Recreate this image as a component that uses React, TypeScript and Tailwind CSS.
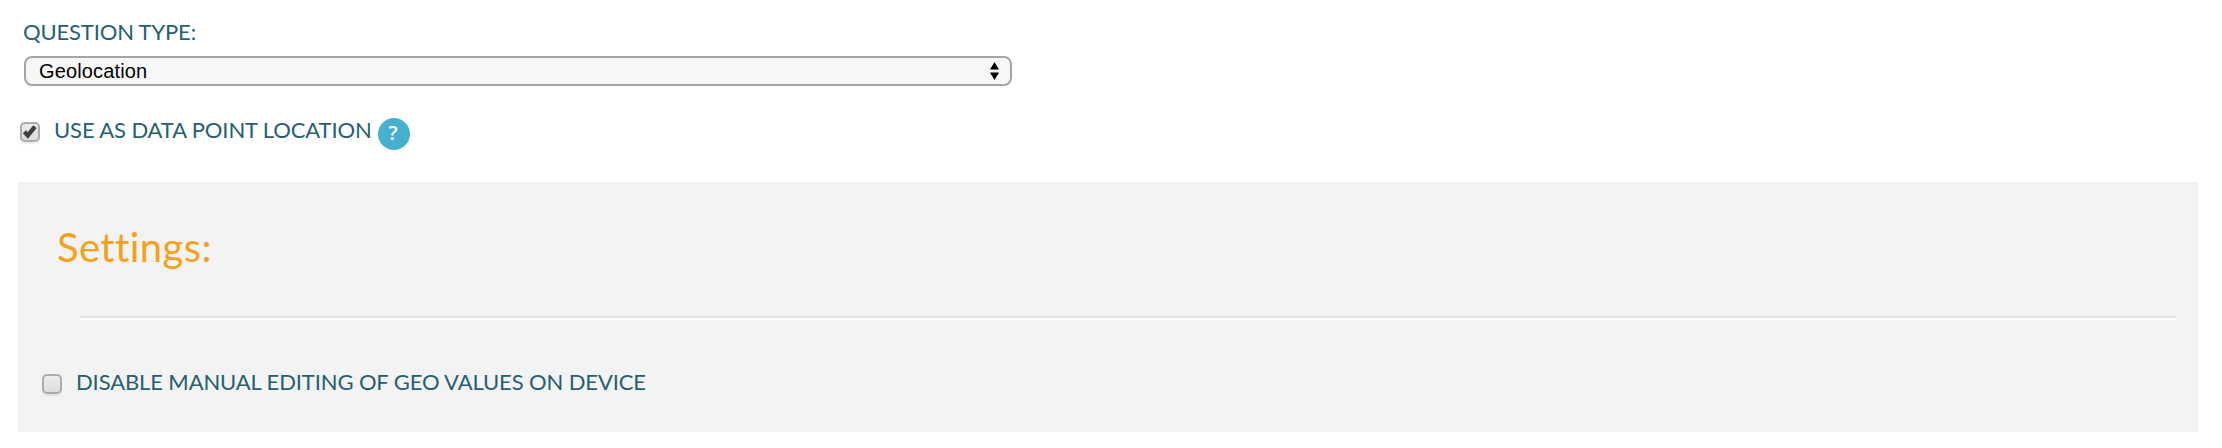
import type { ReactNode } from 'react';

function Check({ checked = false }: { checked?: boolean }) {
  return (
    <span
      role="checkbox"
      aria-checked={checked}
      className="block h-5 w-5 shrink-0 rounded-[5px] border-2 border-[#acacac] bg-linear-to-b from-[#ececec] to-[#dcdcdc] shadow-[0_2px_1px_rgba(0,0,0,0.08)]"
    >
      {checked && (
        <svg viewBox="0 0 16 16" className="h-4 w-4 overflow-visible">
          <path d="M2.4 7.8 L5.8 11.4 L13 2.6" fill="none" stroke="#404040" strokeWidth="4.4" />
        </svg>
      )}
    </span>
  );
}

function Label({ children, className }: { children: ReactNode; className: string }) {
  return (
    <span className={`block whitespace-nowrap text-[22px] leading-6 text-[#265f70] ${className}`}>{children}</span>
  );
}

export default function App() {
  return (
    <main className="h-[448px] w-[2222px] overflow-hidden bg-white pl-[18px] pt-5 font-['Lato',sans-serif]">
      <Label className="ml-[5px] tracking-[-0.15px]">QUESTION TYPE:</Label>
      <div
        role="combobox"
        aria-expanded="false"
        className="ml-1.5 mt-3 flex h-[30px] w-[988px] items-center justify-between rounded-lg border-2 border-[#a5a5a5] bg-[#f7f7f7] pb-px pl-[13px] pr-[11px]"
      >
        <span className="font-['Liberation_Sans',sans-serif] text-[20px] leading-6 tracking-[0.15px] text-black">
          Geolocation
        </span>
        <svg viewBox="0 0 9 18" className="h-[18px] w-[9px]">
          <path d="M4.5 0 L9 7.5 H0 Z M0 10.5 H9 L4.5 18 Z" fill="#000" />
        </svg>
      </div>
      <div className="mt-8 flex h-8 pl-0.5">
        <div className="mt-1">
          <Check checked />
        </div>
        <Label className="ml-[14px] w-[324px] tracking-[-0.11px]">USE AS DATA POINT LOCATION</Label>
        <span className="flex h-8 w-8 items-center justify-center rounded-full bg-[#48b0cf] pb-0.5 pr-0.5 font-['Open_Sans',sans-serif] text-[20px] font-semibold leading-none text-white">
          ?
        </span>
      </div>
      <section className="mt-8 h-[250px] w-[2180px] bg-[#f3f3f3] pt-[41px]">
        <h2 className="ml-[39px] text-[40px] leading-[48px] tracking-[0.4px] text-[#f7a01b]">Settings:</h2>
        <hr className="ml-[62px] mt-[45px] h-1 w-[2096px] border-b-2 border-t-2 border-b-white border-t-[#e2e2e2]" />
        <div className="mt-[50px] flex pl-6">
          <div className="mt-1">
            <Check />
          </div>
          <Label className="ml-[14px] tracking-[-0.12px]">DISABLE MANUAL EDITING OF GEO VALUES ON DEVICE</Label>
        </div>
      </section>
    </main>
  );
}
